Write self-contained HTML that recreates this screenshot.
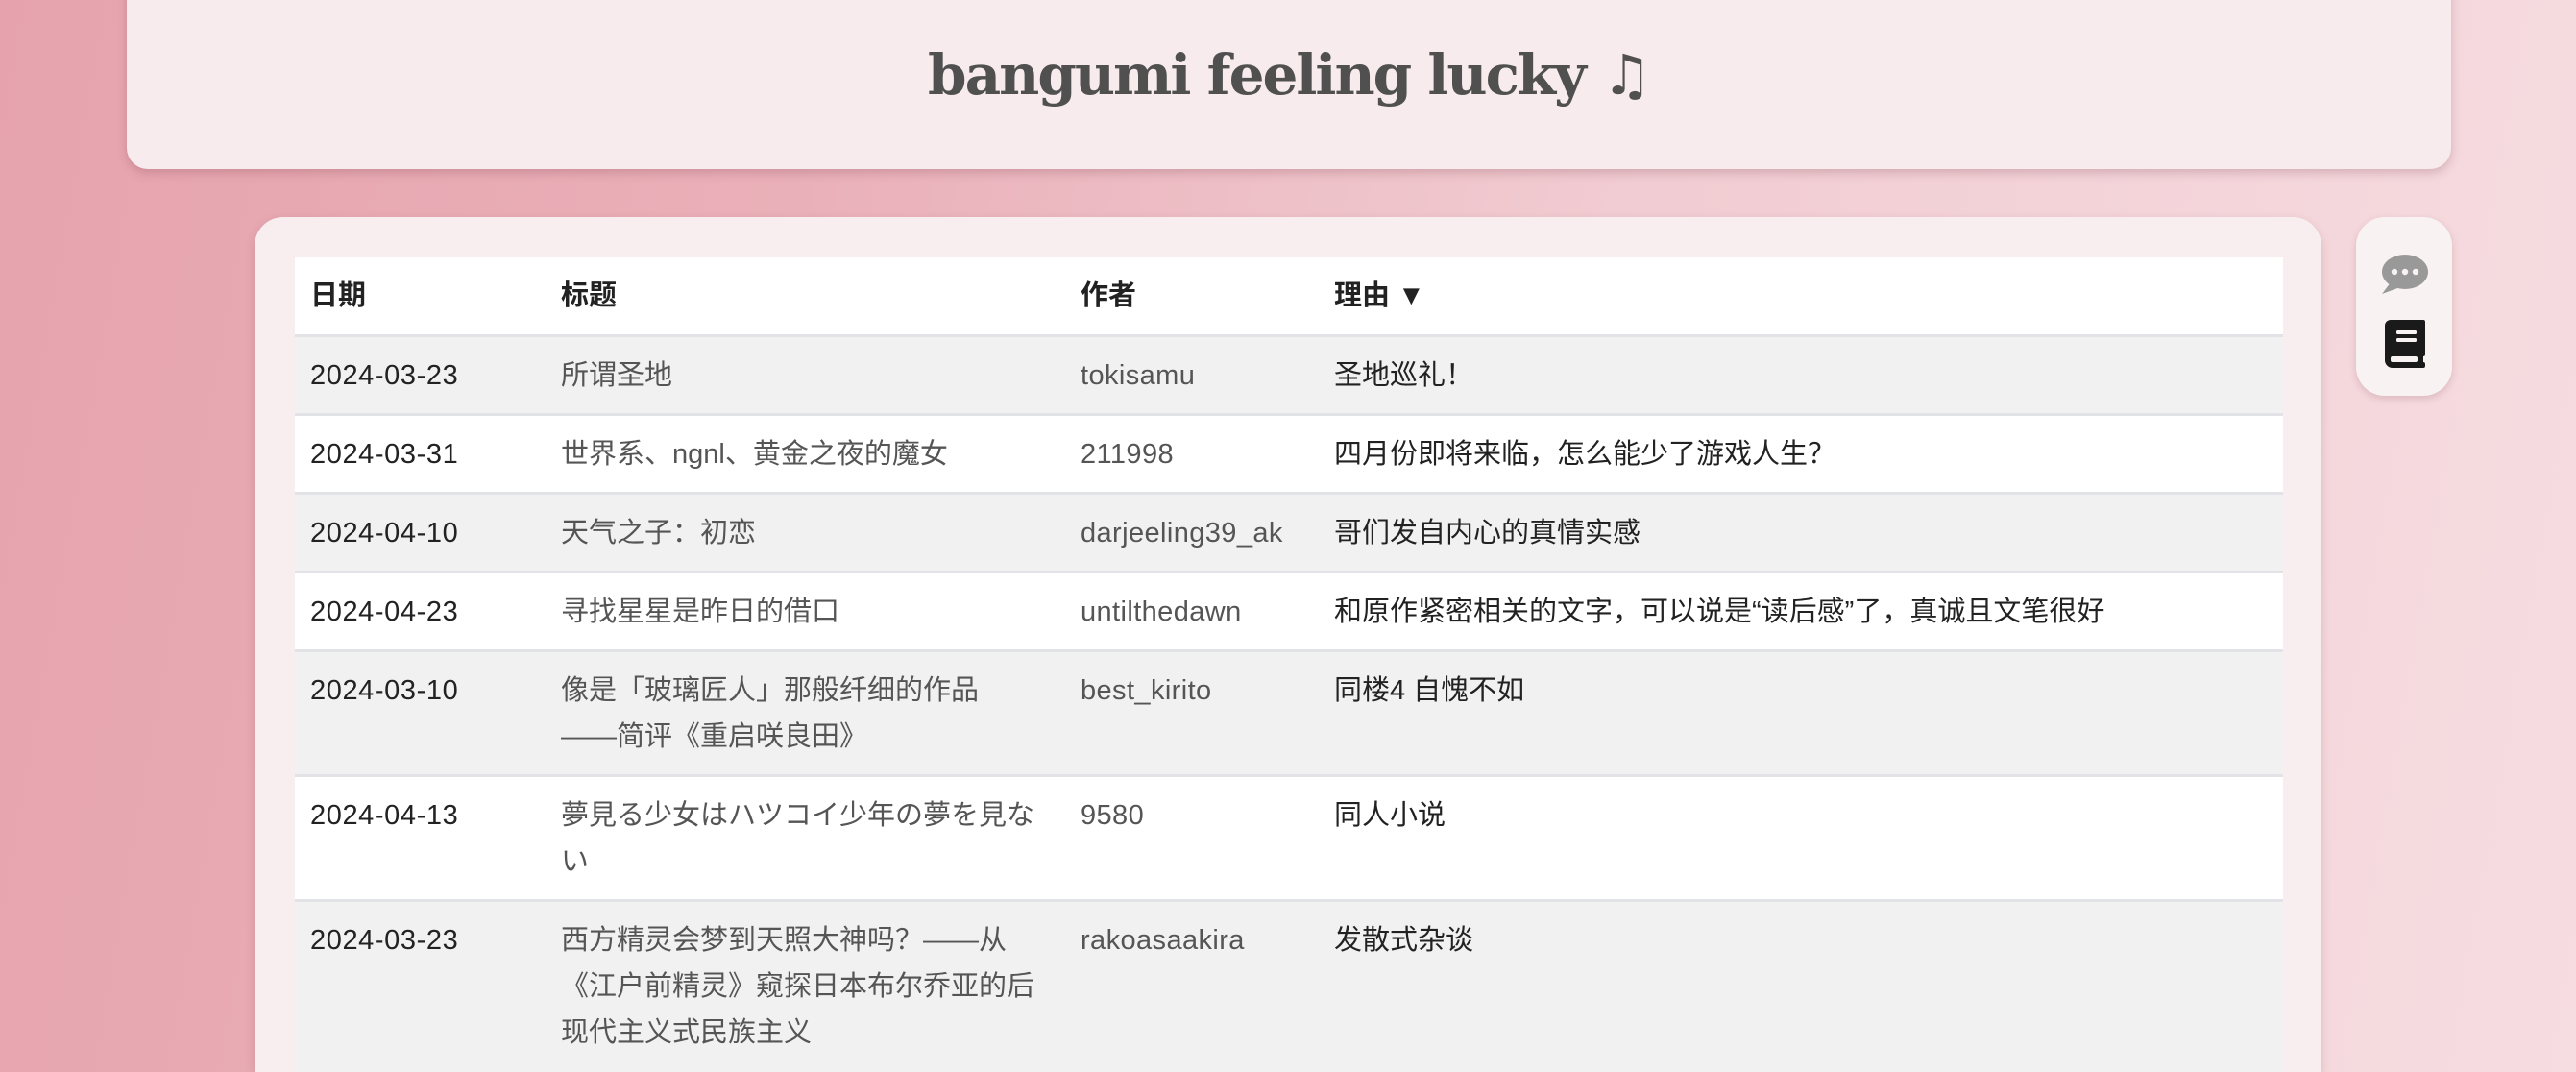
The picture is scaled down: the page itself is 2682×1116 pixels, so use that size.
<!DOCTYPE html>
<html><head><meta charset="utf-8">
<style>
html,body{margin:0;padding:0;width:2682px;height:1116px;overflow:hidden;}
body{position:relative;
background:linear-gradient(100deg,#e6a3ad 0%,#eab0b9 30%,#f1ccd2 60%,#f6dde1 100%);
font-family:"Liberation Sans","Noto Sans CJK SC",sans-serif;}
.header{position:absolute;left:132px;top:-30px;width:2420px;height:206px;background:#f7ebed;border-radius:22px;
box-shadow:0 4px 10px rgba(120,60,70,.25);}
.header h1{margin:0;position:absolute;top:30px;left:0;right:0;text-align:center;line-height:156px;
font-family:"DejaVu Serif","Liberation Serif",serif;font-weight:bold;font-size:58px;color:#505050;letter-spacing:-2px;}
.main{position:absolute;left:265px;top:226px;width:2152px;height:890px;background:#f8eef0;border-radius:30px 30px 0 0;
box-shadow:0 4px 10px rgba(120,60,70,.2);overflow:hidden;}
table{position:absolute;left:42px;top:42px;width:2070px;border-collapse:collapse;table-layout:fixed;background:#fff;}
th,td{text-align:left;vertical-align:top;padding:16px 24px 15px 16px;line-height:48px;font-size:29px;}
th{font-weight:bold;color:#222;padding:16px 16px 16px 16px;}
tr{border-top:3px solid #e1e3e6;}
thead tr{border-top:none;}
tbody tr:nth-child(odd){background:#f1f1f1;}
tbody tr:last-child td{padding-bottom:60px;}
td.d{color:#222;letter-spacing:.6px;}
td.t,td.a{color:#555;}
td.a{letter-spacing:.4px;}
td.r{color:#222;}
.side{position:absolute;left:2453px;top:226px;width:100px;height:186px;background:#f8f2f3;border-radius:30px;
box-shadow:0 3px 8px rgba(120,60,70,.2);}
</style></head><body>
<div class="header"><h1>bangumi feeling lucky ♫</h1></div>
<div class="main">
<table>
<colgroup><col style="width:261px"><col style="width:541px"><col style="width:264px"><col></colgroup>
<thead><tr><th>日期</th><th>标题</th><th>作者</th><th>理由 ▼</th></tr></thead>
<tbody>
<tr><td class="d">2024-03-23</td><td class="t">所谓圣地</td><td class="a">tokisamu</td><td class="r">圣地巡礼！</td></tr>
<tr><td class="d">2024-03-31</td><td class="t">世界系、ngnl、黄金之夜的魔女</td><td class="a">211998</td><td class="r">四月份即将来临，怎么能少了游戏人生？</td></tr>
<tr><td class="d">2024-04-10</td><td class="t">天气之子：初恋</td><td class="a">darjeeling39_ak</td><td class="r">哥们发自内心的真情实感</td></tr>
<tr><td class="d">2024-04-23</td><td class="t">寻找星星是昨日的借口</td><td class="a">untilthedawn</td><td class="r">和原作紧密相关的文字，可以说是“读后感”了，真诚且文笔很好</td></tr>
<tr><td class="d">2024-03-10</td><td class="t">像是「玻璃匠人」那般纤细的作品<br>——简评《重启咲良田》</td><td class="a">best_kirito</td><td class="r">同楼4 自愧不如</td></tr>
<tr><td class="d">2024-04-13</td><td class="t">夢見る少女はハツコイ少年の夢を見な<br>い</td><td class="a">9580</td><td class="r">同人小说</td></tr>
<tr><td class="d">2024-03-23</td><td class="t">西方精灵会梦到天照大神吗？——从<br>《江户前精灵》窥探日本布尔乔亚的后<br>现代主义式民族主义</td><td class="a">rakoasaakira</td><td class="r">发散式杂谈</td></tr>
</tbody></table>
</div>
<div class="side">
<svg style="position:absolute;left:26px;top:38px" width="50" height="44" viewBox="0 0 50 44">
<ellipse cx="25" cy="19" rx="24" ry="18" fill="#999"/>
<path d="M10 30 L1 42 L20 35 Z" fill="#999"/>
<circle cx="14" cy="19" r="3.2" fill="#f8f2f3"/><circle cx="25" cy="19" r="3.2" fill="#f8f2f3"/><circle cx="36" cy="19" r="3.2" fill="#f8f2f3"/>
</svg>
<svg style="position:absolute;left:30px;top:107px" width="44" height="50" viewBox="0 0 44 50">
<path d="M6 0 H40 a2 2 0 0 1 2 2 V36 a2 2 0 0 1 -2 2 V44 a2 2 0 0 1 2 2 V48 a2 2 0 0 1 -2 2 H8 a8 8 0 0 1 -8 -8 V6 a6 6 0 0 1 6 -6 Z" fill="#1b1a1a"/>
<rect x="6" y="38" width="28" height="6" rx="2" fill="#f8f2f3"/>
<rect x="12" y="11" width="21" height="4" rx="1.5" fill="#f8f2f3"/>
<rect x="12" y="19" width="21" height="4" rx="1.5" fill="#f8f2f3"/>
</svg>
</div>
</body></html>
